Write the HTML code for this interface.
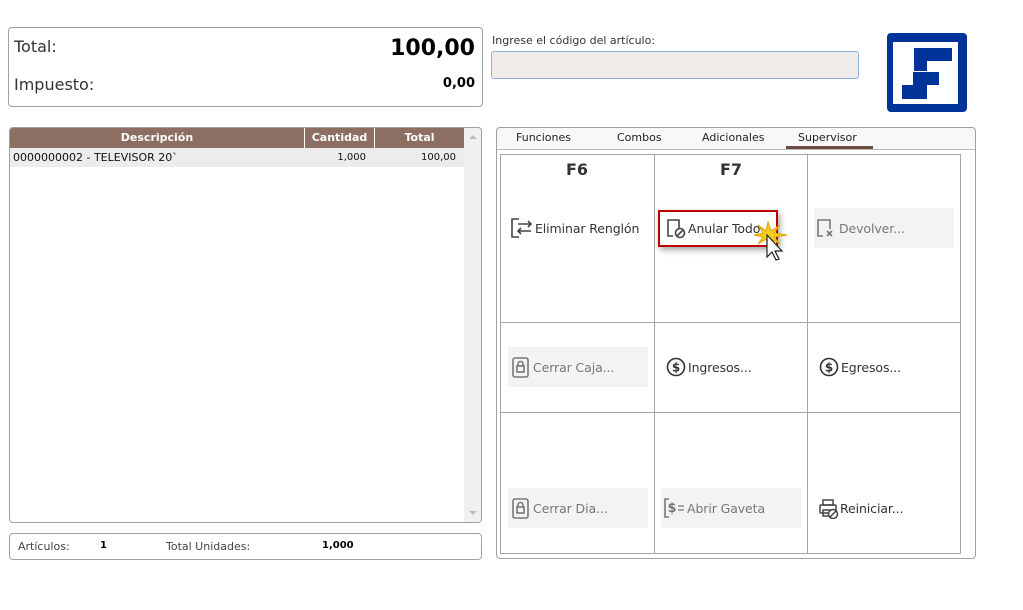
<!DOCTYPE html>
<html><head><meta charset="utf-8">
<style>
*{box-sizing:border-box;margin:0;padding:0}
body{width:1023px;height:610px;background:#fff;position:relative;font-family:"DejaVu Sans","Liberation Sans",sans-serif;color:#222;overflow:hidden}
.abs{position:absolute}
.box{position:absolute;border:1px solid #a0a0a0;border-radius:4px;background:#fff}
.btn{position:absolute;height:40px;display:flex;align-items:center;font-size:12.5px;color:#333;letter-spacing:-0.1px}
.dis{background:#f3f3f3;color:#777}
.btn svg{margin-right:1px}
</style></head><body>

<div class="box" style="left:8px;top:27px;width:475px;height:80px"></div>
<div class="abs" style="left:14px;top:37px;font-size:16px;color:#333">Total:</div>
<div class="abs" style="right:548px;top:36px;font-size:22px;font-weight:bold;color:#000">100,00</div>
<div class="abs" style="left:14px;top:75px;font-size:16px;color:#333">Impuesto:</div>
<div class="abs" style="right:548px;top:76px;font-size:13px;font-weight:bold;color:#000">0,00</div>

<div class="abs" style="left:492px;top:34px;font-size:11px;color:#333">Ingrese el código del artículo:</div>
<div class="abs" style="left:491px;top:51px;width:368px;height:28px;background:#efebe9;border:1.5px solid #8fb0e0;border-radius:3px"></div>

<div class="abs" style="left:887px;top:33px;width:80px;height:79px;background:#003399;border-radius:4px"></div>
<div class="abs" style="left:893px;top:42px;width:65px;height:62px;background:#fff"></div>
<div class="abs" style="left:914px;top:48px;width:38px;height:13px;background:#003399"></div>
<div class="abs" style="left:914px;top:48px;width:13px;height:23px;background:#003399"></div>
<div class="abs" style="left:913px;top:72px;width:26px;height:13px;background:#003399"></div>
<div class="abs" style="left:902px;top:85px;width:25px;height:14px;background:#003399"></div>

<div class="box" style="left:9px;top:127px;width:473px;height:396px;overflow:hidden">
  <div class="abs" style="left:0;top:0;width:454px;height:20px;background:#8d6e63;color:#fff;font-size:11px;font-weight:bold">
    <div class="abs" style="left:0;width:294px;text-align:center;top:3px">Descripción</div>
    <div class="abs" style="left:294px;width:70px;top:0;height:20px;border-left:1px solid #fff;text-align:center;padding-top:3px">Cantidad</div>
    <div class="abs" style="left:364px;width:90px;top:0;height:20px;border-left:1px solid #fff;text-align:center;padding-top:3px">Total</div>
  </div>
  <div class="abs" style="left:0;top:20px;width:454px;height:19px;background:#ececec;font-size:11px;color:#111">
    <div class="abs" style="left:3px;top:3px">0000000002 - TELEVISOR 20`</div>
    <div class="abs" style="left:294px;width:62px;top:4px;text-align:right;font-size:10px">1,000</div>
    <div class="abs" style="left:364px;width:82px;top:4px;text-align:right;font-size:10px">100,00</div>
  </div>
  <div class="abs" style="left:454px;top:0;width:17px;height:394px;background:#f0f0f0"></div>
  <div class="abs" style="left:459px;top:7px;width:0;height:0;border-left:4px solid transparent;border-right:4px solid transparent;border-bottom:4px solid #bbb"></div>
  <div class="abs" style="left:459px;top:383px;width:0;height:0;border-left:4px solid transparent;border-right:4px solid transparent;border-top:4px solid #bbb"></div>
</div>

<div class="box" style="left:9px;top:533px;width:473px;height:27px"></div>
<div class="abs" style="left:18px;top:540px;font-size:11px;color:#444">Artículos:</div>
<div class="abs" style="left:100px;top:540px;font-size:10px;font-weight:bold;color:#000">1</div>
<div class="abs" style="left:166px;top:540px;font-size:11px;color:#444">Total Unidades:</div>
<div class="abs" style="left:322px;top:540px;font-size:10px;font-weight:bold;color:#000">1,000</div>

<div class="box" style="left:496px;top:127px;width:480px;height:432px"></div>
<div class="abs" style="left:497px;top:128px;width:478px;height:22px;background:#f8f8f8;border-bottom:1px solid #b8b8b8;border-radius:4px 4px 0 0"></div>
<div class="abs" style="left:516px;top:131px;font-size:11px;color:#222">Funciones</div>
<div class="abs" style="left:617px;top:131px;font-size:11px;color:#222">Combos</div>
<div class="abs" style="left:702px;top:131px;font-size:11px;color:#222">Adicionales</div>
<div class="abs" style="left:798px;top:131px;font-size:11px;color:#222">Supervisor</div>
<div class="abs" style="left:786px;top:146px;width:87px;height:3px;background:#6d4c41"></div>

<div class="abs" style="left:500px;top:154px;width:461px;height:400px;border:1px solid #a5a5a5"></div>
<div class="abs" style="left:654px;top:154px;width:1px;height:400px;background:#a5a5a5"></div>
<div class="abs" style="left:807px;top:154px;width:1px;height:400px;background:#a5a5a5"></div>
<div class="abs" style="left:500px;top:322px;width:461px;height:1px;background:#a5a5a5"></div>
<div class="abs" style="left:500px;top:412px;width:461px;height:1px;background:#a5a5a5"></div>

<div class="abs" style="left:566px;top:160px;font-size:16px;font-weight:bold;color:#333">F6</div>
<div class="abs" style="left:720px;top:160px;font-size:16px;font-weight:bold;color:#333">F7</div>

<div class="btn" style="left:510px;top:208px">
<svg width="24" height="22" viewBox="0 0 24 22" fill="none" stroke="#444" stroke-width="1.6"><path d="M9 2H2v18h7"/><path d="M8 7h13M18 4l3 3-3 3"/><path d="M8 14h13M11 11l-3 3 3 3"/></svg>Eliminar Renglón</div>

<div class="abs" style="left:658px;top:210px;width:120px;height:37px;border:2px solid #b00;box-shadow:2px 3px 6px rgba(0,0,0,.35)"></div>
<div class="btn" style="left:665px;top:208px">
<svg width="22" height="22" viewBox="0 0 22 22" fill="none" stroke="#444" stroke-width="1.6"><path d="M8 19H3V3h11v8"/><circle cx="15" cy="16" r="4.5"/><path d="M12 19l6-6"/></svg>Anular Todo</div>
<svg class="abs" style="left:754px;top:220px" width="36" height="42" viewBox="0 0 36 42"><polygon points="14,2 17,11 26,5 20,13 33,15 20,17 26,24 17,19 14,28 12,19 4,24 9,17 0,15 9,13 4,5 12,11" fill="#f5d020" stroke="#e0a000" stroke-width="1"/><path d="M13 15v22l5-5 4 8 3-1-4-8h7z" fill="#fff" stroke="#222" stroke-width="1.2"/></svg>

<div class="btn dis" style="left:814px;top:208px;width:140px">
<svg width="24" height="22" viewBox="0 0 24 22" fill="none" stroke="#777" stroke-width="1.6"><path d="M9 19H4V3h12v9"/><path d="M13 14l5 5M18 14l-5 5"/></svg>Devolver...</div>

<div class="btn dis" style="left:508px;top:347px;width:140px">
<svg width="24" height="22" viewBox="0 0 24 22" fill="none" stroke="#777" stroke-width="1.6"><rect x="5" y="2" width="15" height="19" rx="2"/><rect x="9" y="10" width="7" height="6"/><path d="M10 10V8a2.5 2.5 0 015 0v2"/></svg>Cerrar Caja...</div>
<div class="btn" style="left:666px;top:347px">
<svg width="21" height="22" viewBox="0 0 21 22" fill="none" stroke="#333" stroke-width="1.6"><circle cx="10" cy="11" r="8.5"/><text x="10" y="15.5" font-size="12" font-weight="bold" text-anchor="middle" fill="#333" stroke="none" font-family="DejaVu Sans">$</text></svg>Ingresos...</div>
<div class="btn" style="left:819px;top:347px">
<svg width="21" height="22" viewBox="0 0 21 22" fill="none" stroke="#333" stroke-width="1.6"><circle cx="10" cy="11" r="8.5"/><text x="10" y="15.5" font-size="12" font-weight="bold" text-anchor="middle" fill="#333" stroke="none" font-family="DejaVu Sans">$</text></svg>Egresos...</div>

<div class="btn dis" style="left:508px;top:488px;width:140px">
<svg width="24" height="22" viewBox="0 0 24 22" fill="none" stroke="#777" stroke-width="1.6"><rect x="5" y="2" width="15" height="19" rx="2"/><rect x="9" y="10" width="7" height="6"/><path d="M10 10V8a2.5 2.5 0 015 0v2"/></svg>Cerrar Dia...</div>
<div class="btn dis" style="left:661px;top:488px;width:140px">
<svg width="25" height="22" viewBox="0 0 25 22" fill="none" stroke="#777" stroke-width="1.6"><path d="M8 2H4v18h4"/><text x="11" y="15" font-size="13" font-weight="bold" text-anchor="middle" fill="#777" stroke="none" font-family="DejaVu Sans">$</text><path d="M17 9h6M17 13h6" stroke-width="1.3"/></svg>Abrir Gaveta</div>
<div class="btn" style="left:819px;top:488px">
<svg width="20" height="22" viewBox="0 0 20 22" fill="none" stroke="#444" stroke-width="1.5"><rect x="4" y="3" width="10" height="5"/><rect x="1" y="8" width="16" height="8" rx="1"/><rect x="4" y="13" width="8" height="6"/><circle cx="14" cy="17" r="4.5" fill="#fff"/><path d="M11 20l6-6"/></svg>Reiniciar...</div>

</body></html>
